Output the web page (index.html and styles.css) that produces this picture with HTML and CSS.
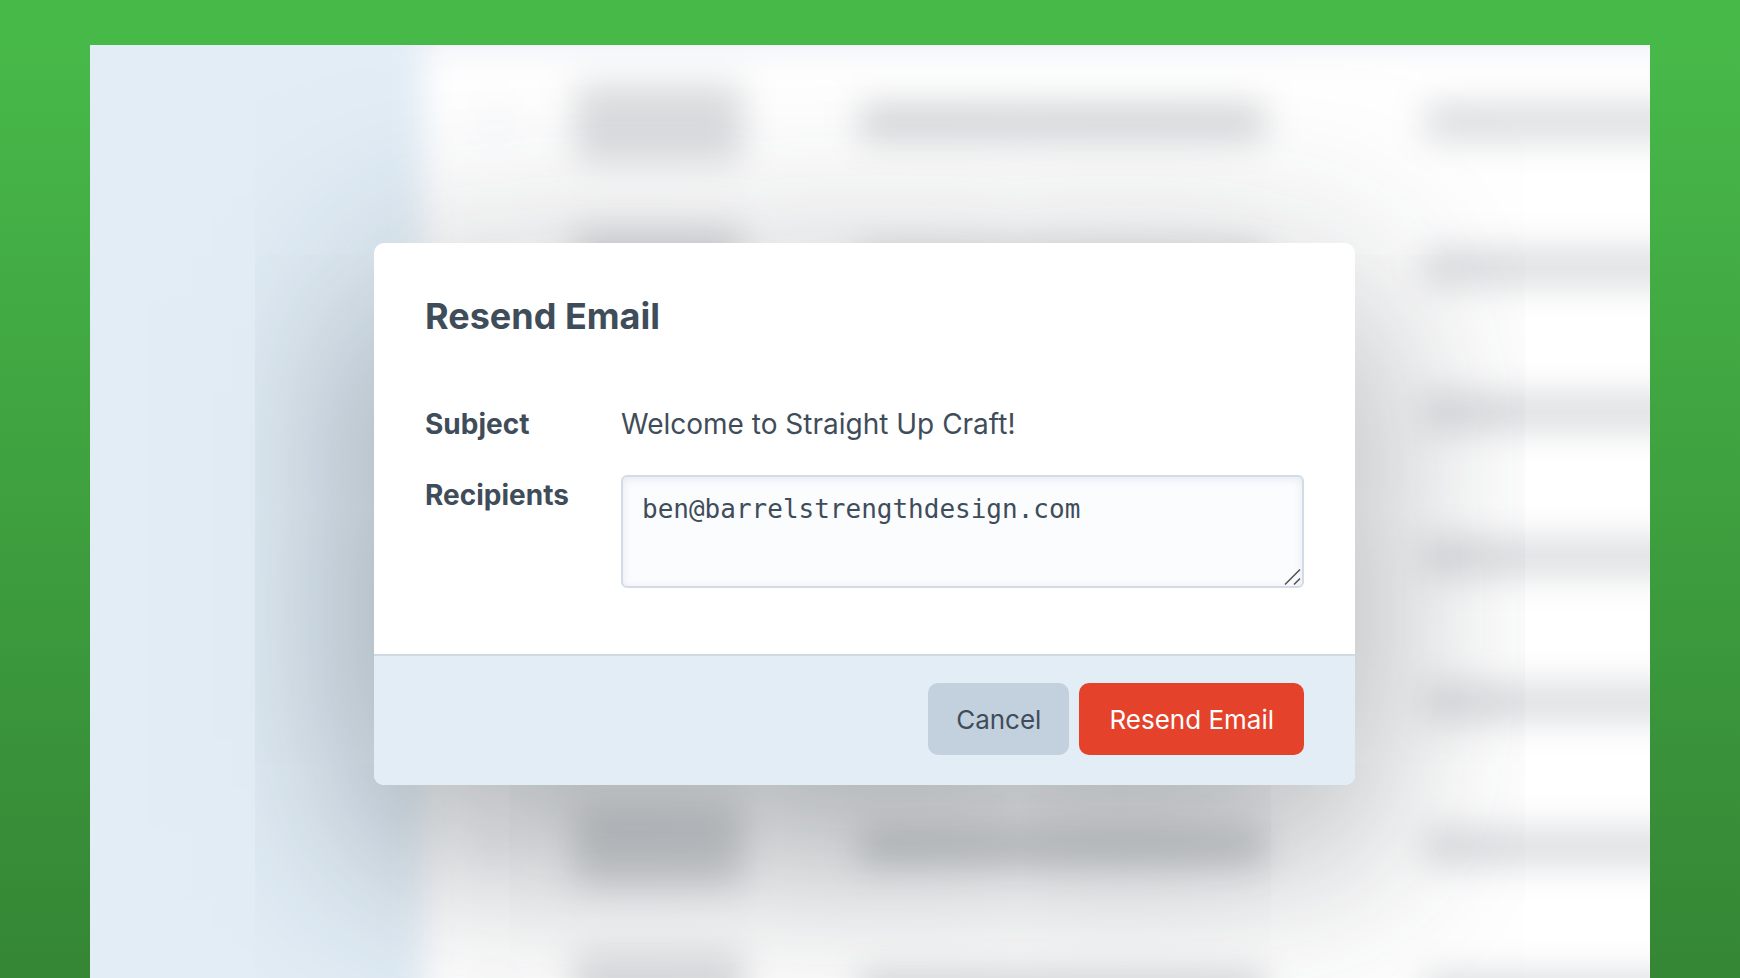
FILE: index.html
```html
<!DOCTYPE html>
<html lang="en">
<head>
<meta charset="utf-8">
<title>Resend Email</title>
<link rel="stylesheet" href="styles.css">
</head>
<body class="page">
<main class="frame">
  <div class="backdrop" aria-hidden="true">
    <div class="sidebar"></div>
    <div class="listing">
      <div class="listing-head"></div>
      <div class="row"><i class="check"></i><i class="name"></i><i class="mail"></i><i class="date"></i></div>
      <div class="row"><i class="check"></i><i class="name"></i><i class="mail"></i><i class="date"></i></div>
      <div class="row"><i class="check"></i><i class="name"></i><i class="mail"></i><i class="date"></i></div>
      <div class="row"><i class="check"></i><i class="name"></i><i class="mail"></i><i class="date"></i></div>
      <div class="row"><i class="check"></i><i class="name"></i><i class="mail"></i><i class="date"></i></div>
      <div class="row"><i class="check"></i><i class="name"></i><i class="mail"></i><i class="date"></i></div>
      <div class="row"><i class="check"></i><i class="name"></i><i class="mail"></i><i class="date"></i></div>
    </div>
  </div>
  <form class="modal" role="dialog" aria-labelledby="modal-title">
    <div class="modal-body">
      <h1 class="modal-title" id="modal-title">Resend Email</h1>
      <div class="fields">
        <span class="label">Subject</span>
        <span class="value">Welcome to Straight Up Craft!</span>
        <label class="label" for="recipients">Recipients</label>
        <div class="textbox">
          <textarea class="textarea" id="recipients" spellcheck="false">ben@barrelstrengthdesign.com</textarea>
          <svg class="grip" viewBox="0 0 18 18" width="18" height="18" aria-hidden="true"><path d="M1 16.5 16 1.500M10 16.500l6-6" fill="none" stroke="#555" stroke-width="1.600"/></svg>
        </div>
      </div>
    </div>
    <footer class="modal-footer">
      <button class="button" type="button">Cancel</button>
      <button class="button submit" type="submit">Resend Email</button>
    </footer>
  </form>
</main>
</body>
</html>
```

FILE: styles.css
```css
* {
  box-sizing: border-box;
}

.page {
  display: flex;
  height: 100vh;
  margin: 0;
  padding: 45px 90px 0;
  overflow: hidden;
  background: linear-gradient(#47b949 4%, #358735 98%);
  color: #3f4d5a;
  font-family: Inter, "Liberation Sans", sans-serif;
}

.frame {
  display: grid;
  flex: 1;
  grid-template: minmax(0, 1fr) / minmax(0, 1fr);
  overflow: hidden;
  background: #fff;
}

/* The page behind the dialog; it overhangs the frame so the blur has no soft rim. */
.backdrop {
  display: flex;
  grid-area: 1 / 1;
  margin: -40px;
  overflow: hidden;
  background: #fff;
  filter: blur(17px);
}

.sidebar {
  width: 373px;
  background: #e2edf6;
}

.listing {
  flex: 1;
}

.listing-head {
  height: 44px;
  background: #edeff6;
}

.row {
  display: grid;
  grid-template-columns: 95fr 285fr 565fr 265fr;
  align-items: center;
  height: 145px;
  padding-left: 57px;
}

.check {
  width: 30px;
  height: 30px;
  background: #f7f8fb;
}

.name {
  width: 168px;
  height: 78px;
  background: #dcdee0;
}

.mail {
  width: 405px;
  height: 38px;
  background: #d7d9db;
}

.date {
  height: 38px;
  background: #dcdee0;
}

.modal {
  z-index: 1;
  grid-area: 1 / 1;
  align-self: start;
  margin: 198px 295px 0 284px;
  overflow: hidden;
  border-radius: 10px;
  background: #fff;
  box-shadow: 0 52px 200px rgba(31, 41, 51, 0.5);
}

.modal-body {
  padding: 48px 51px 66px;
}

.modal-title {
  margin: 0 0 63px;
  font-size: 36px;
  font-weight: 700;
  line-height: 50px;
}

.fields {
  display: grid;
  grid-template-columns: 172px 1fr;
  column-gap: 24px;
  row-gap: 31px;
  font-size: 28px;
  line-height: 40px;
}

.label {
  font-weight: 700;
}

.textbox {
  position: relative;
}

.textarea {
  display: block;
  width: 100%;
  height: 113px;
  margin: 0;
  padding: 14px 19px;
  border: 2px solid #d3dce6;
  border-radius: 6px;
  background: #fbfcfe;
  box-shadow: inset 0 2px 8px rgba(205, 216, 228, 0.5);
  color: #3f4d5a;
  font-family: "DejaVu Sans Mono", monospace;
  font-size: 26px;
  line-height: 36px;
  outline: 0;
  resize: none;
}

.grip {
  position: absolute;
  right: 2px;
  bottom: 2px;
}

.modal-footer {
  display: flex;
  justify-content: flex-end;
  gap: 10px;
  padding: 27px 51px 30px;
  border-top: 2px solid #d0dae5;
  background: #e2edf6;
}

.button {
  height: 72px;
  padding: 0 28px;
  border: 0;
  border-radius: 10px;
  background: #c3d0de;
  color: #3f4d5a;
  font-family: inherit;
  font-size: 26px;
}

.submit {
  padding: 0 30px;
  background: #e5422b;
  color: #fff;
}
```
